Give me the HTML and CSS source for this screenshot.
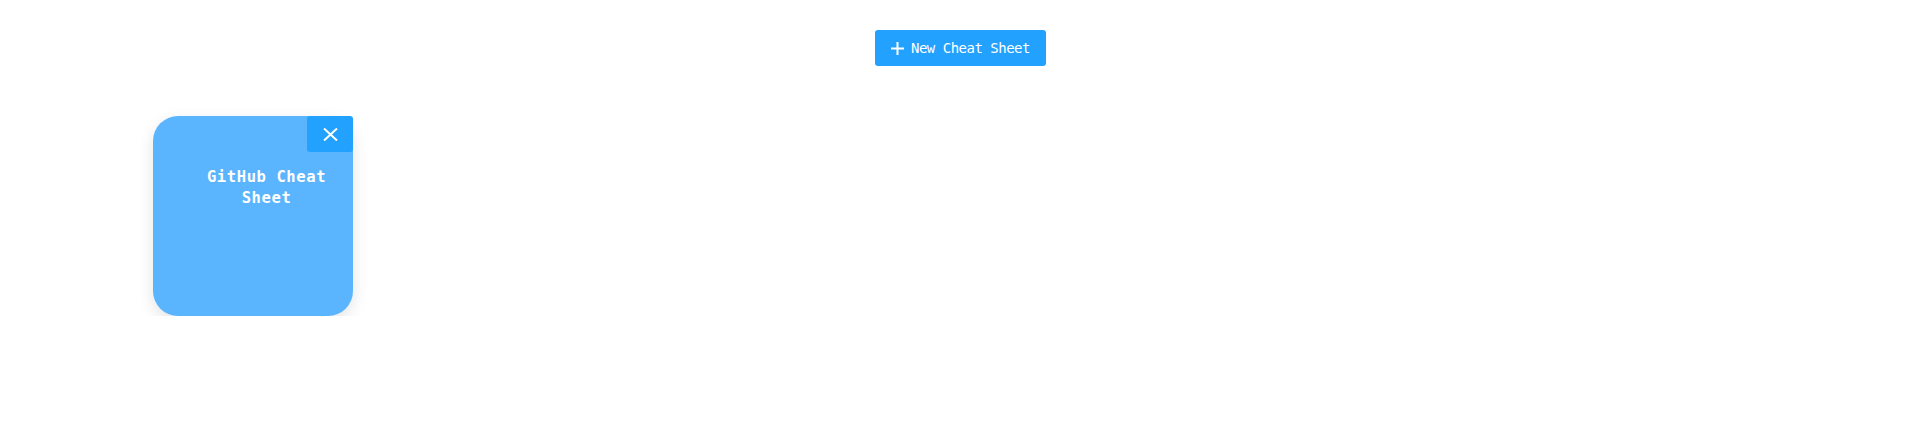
FILE: index.html
```html
<!DOCTYPE html>
<html>
<head>
<meta charset="utf-8">
<link rel="stylesheet" href="styles.css">
</head>
<body>
<div class="toolbar">
  <button class="new-btn">
    <svg class="plus" viewBox="0 0 13 13" width="13" height="13"><path d="M6.5 0v13M0 6.5h13" stroke="#fff" stroke-width="2" fill="none"/></svg>
    <span>New Cheat Sheet</span>
  </button>
</div>
<div class="grid">
  <div class="card">
    <button class="close">
      <svg viewBox="0 0 15 13" width="15" height="13"><path d="M1 0.5l13 12M14 0.5l-13 12" stroke="#fff" stroke-width="2" fill="none"/></svg>
    </button>
    <div class="title">GitHub Cheat Sheet</div>
  </div>
</div>
</body>
</html>
```
FILE: styles.css
```css
html, body {
  margin: 0;
  padding: 0;
  background: #fff;
  font-family: "DejaVu Sans Mono", monospace;
}
.toolbar {
  display: flex;
  justify-content: center;
  padding-top: 30px;
}
.new-btn {
  display: flex;
  align-items: center;
  gap: 7px;
  height: 36px;
  width: 171px;
  padding: 0 0 0 16px;
  background: #22a1fe;
  color: #fff;
  border: none;
  border-radius: 3px;
  font-family: "DejaVu Sans Mono", monospace;
  font-size: 14px;
  letter-spacing: -0.5px;
  margin-left: 2px;
}
.plus { display: block; flex: none; }
.grid {
  display: flex;
  padding: 50px 0 0 153px;
}
.card {
  position: relative;
  width: 200px;
  height: 200px;
  background: #5ab5fe;
  border-radius: 25px;
  box-shadow: 0 5px 16px rgba(0, 0, 0, 0.11);
  box-sizing: border-box;
  padding: 51px 0 0 27px;
}
.close {
  position: absolute;
  top: 0;
  right: 0;
  width: 46px;
  height: 36px;
  background: #22a1fe;
  border: none;
  border-radius: 3px;
  display: flex;
  align-items: center;
  justify-content: center;
  padding: 0;
}
.close svg { display: block; }
.title {
  color: #fff;
  font-weight: bold;
  font-size: 15.5px;
  letter-spacing: 0.6px;
  line-height: 21px;
  text-align: center;
}
```
